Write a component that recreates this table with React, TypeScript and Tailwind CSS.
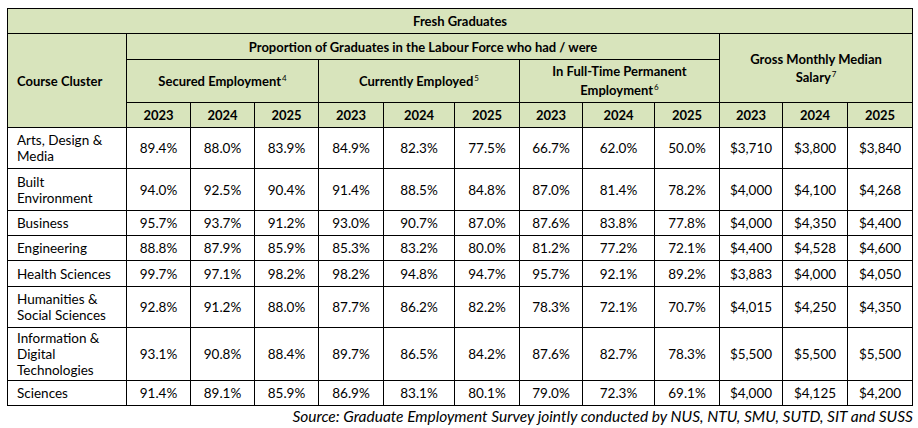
import React from 'react';

// Fresh graduates employment table
type Row = { name: string[]; values: string[]; h: string };

const ROWS: Row[] = [
  { name: ['Arts, Design &', 'Media'], h: 'h-[41px]', values: ['89.4%', '88.0%', '83.9%', '84.9%', '82.3%', '77.5%', '66.7%', '62.0%', '50.0%', '$3,710', '$3,800', '$3,840'] },
  { name: ['Built', 'Environment'], h: 'h-[42px]', values: ['94.0%', '92.5%', '90.4%', '91.4%', '88.5%', '84.8%', '87.0%', '81.4%', '78.2%', '$4,000', '$4,100', '$4,268'] },
  { name: ['Business'], h: 'h-[25px]', values: ['95.7%', '93.7%', '91.2%', '93.0%', '90.7%', '87.0%', '87.6%', '83.8%', '77.8%', '$4,000', '$4,350', '$4,400'] },
  { name: ['Engineering'], h: 'h-[25px]', values: ['88.8%', '87.9%', '85.9%', '85.3%', '83.2%', '80.0%', '81.2%', '77.2%', '72.1%', '$4,400', '$4,528', '$4,600'] },
  { name: ['Health Sciences'], h: 'h-[26px]', values: ['99.7%', '97.1%', '98.2%', '98.2%', '94.8%', '94.7%', '95.7%', '92.1%', '89.2%', '$3,883', '$4,000', '$4,050'] },
  { name: ['Humanities &', 'Social Sciences'], h: 'h-[41px]', values: ['92.8%', '91.2%', '88.0%', '87.7%', '86.2%', '82.2%', '78.3%', '72.1%', '70.7%', '$4,015', '$4,250', '$4,350'] },
  { name: ['Information &', 'Digital', 'Technologies'], h: 'h-[53px]', values: ['93.1%', '90.8%', '88.4%', '89.7%', '86.5%', '84.2%', '87.6%', '82.7%', '78.3%', '$5,500', '$5,500', '$5,500'] },
  { name: ['Sciences'], h: 'h-[25px]', values: ['91.4%', '89.1%', '85.9%', '86.9%', '83.1%', '80.1%', '79.0%', '72.3%', '69.1%', '$4,000', '$4,125', '$4,200'] },
];

const COLS = [119, 64, 64, 64, 65, 71, 65, 63, 72, 65, 63, 65, 65];
const YEARS = ['2023', '2024', '2025'];

const Sup: React.FC<{ n: string }> = ({ n }) => (
  <span className="text-[8px] font-normal leading-none align-[5px] ml-px">{n}</span>
);

export default function App() {
  const head = 'border border-black bg-[#d8e4bc] font-bold text-center p-0 text-[13px]';
  const cell = 'border border-black text-center p-0';
  return (
    <div className="w-[918px] h-[428px] bg-white pt-2 pl-[7px] text-black font-['Lato',sans-serif] text-[13.5px] leading-[16px]">
      <table className="table-fixed border-collapse w-[906px]">
        <colgroup>
          {COLS.map((w, i) => (
            <col key={i} style={{ width: w }} />
          ))}
        </colgroup>
        <thead>
          <tr className="h-[25px]">
            <th colSpan={13} className={head}>Fresh Graduates</th>
          </tr>
          <tr className="h-[26px]">
            <th rowSpan={3} className={`${head} text-left pl-[9px]`}>Course Cluster</th>
            <th colSpan={9} className={head}>Proportion of Graduates in the Labour Force who had / were</th>
            <th colSpan={3} rowSpan={2} className={`${head} leading-[18px]`}>
              Gross Monthly Median
              <br />
              Salary<Sup n="7" />
            </th>
          </tr>
          <tr className="h-[43px]">
            <th colSpan={3} className={head}>Secured Employment<Sup n="4" /></th>
            <th colSpan={3} className={head}>Currently Employed<Sup n="5" /></th>
            <th colSpan={3} className={`${head} leading-[19px]`}>
              In Full-Time Permanent
              <br />
              Employment<Sup n="6" />
            </th>
          </tr>
          <tr className="h-[25px]">
            {[0, 1, 2, 3].flatMap((g) =>
              YEARS.map((y) => (
                <th key={`${g}-${y}`} className={head}>{y}</th>
              ))
            )}
          </tr>
        </thead>
        <tbody>
          {ROWS.map((r) => (
            <tr key={r.name.join(' ')} className={r.h}>
              <td className="border border-black text-left pl-[9px] p-0">
                {r.name.map((line) => (
                  <div key={line}>{line}</div>
                ))}
              </td>
              {r.values.map((v, i) => (
                <td key={i} className={cell}>{v}</td>
              ))}
            </tr>
          ))}
        </tbody>
      </table>
      <p className="text-right pr-[5px] italic text-[15.5px] leading-[20px]">
        Source: Graduate Employment Survey jointly conducted by NUS, NTU, SMU, SUTD, SIT and SUSS
      </p>
    </div>
  );
}
